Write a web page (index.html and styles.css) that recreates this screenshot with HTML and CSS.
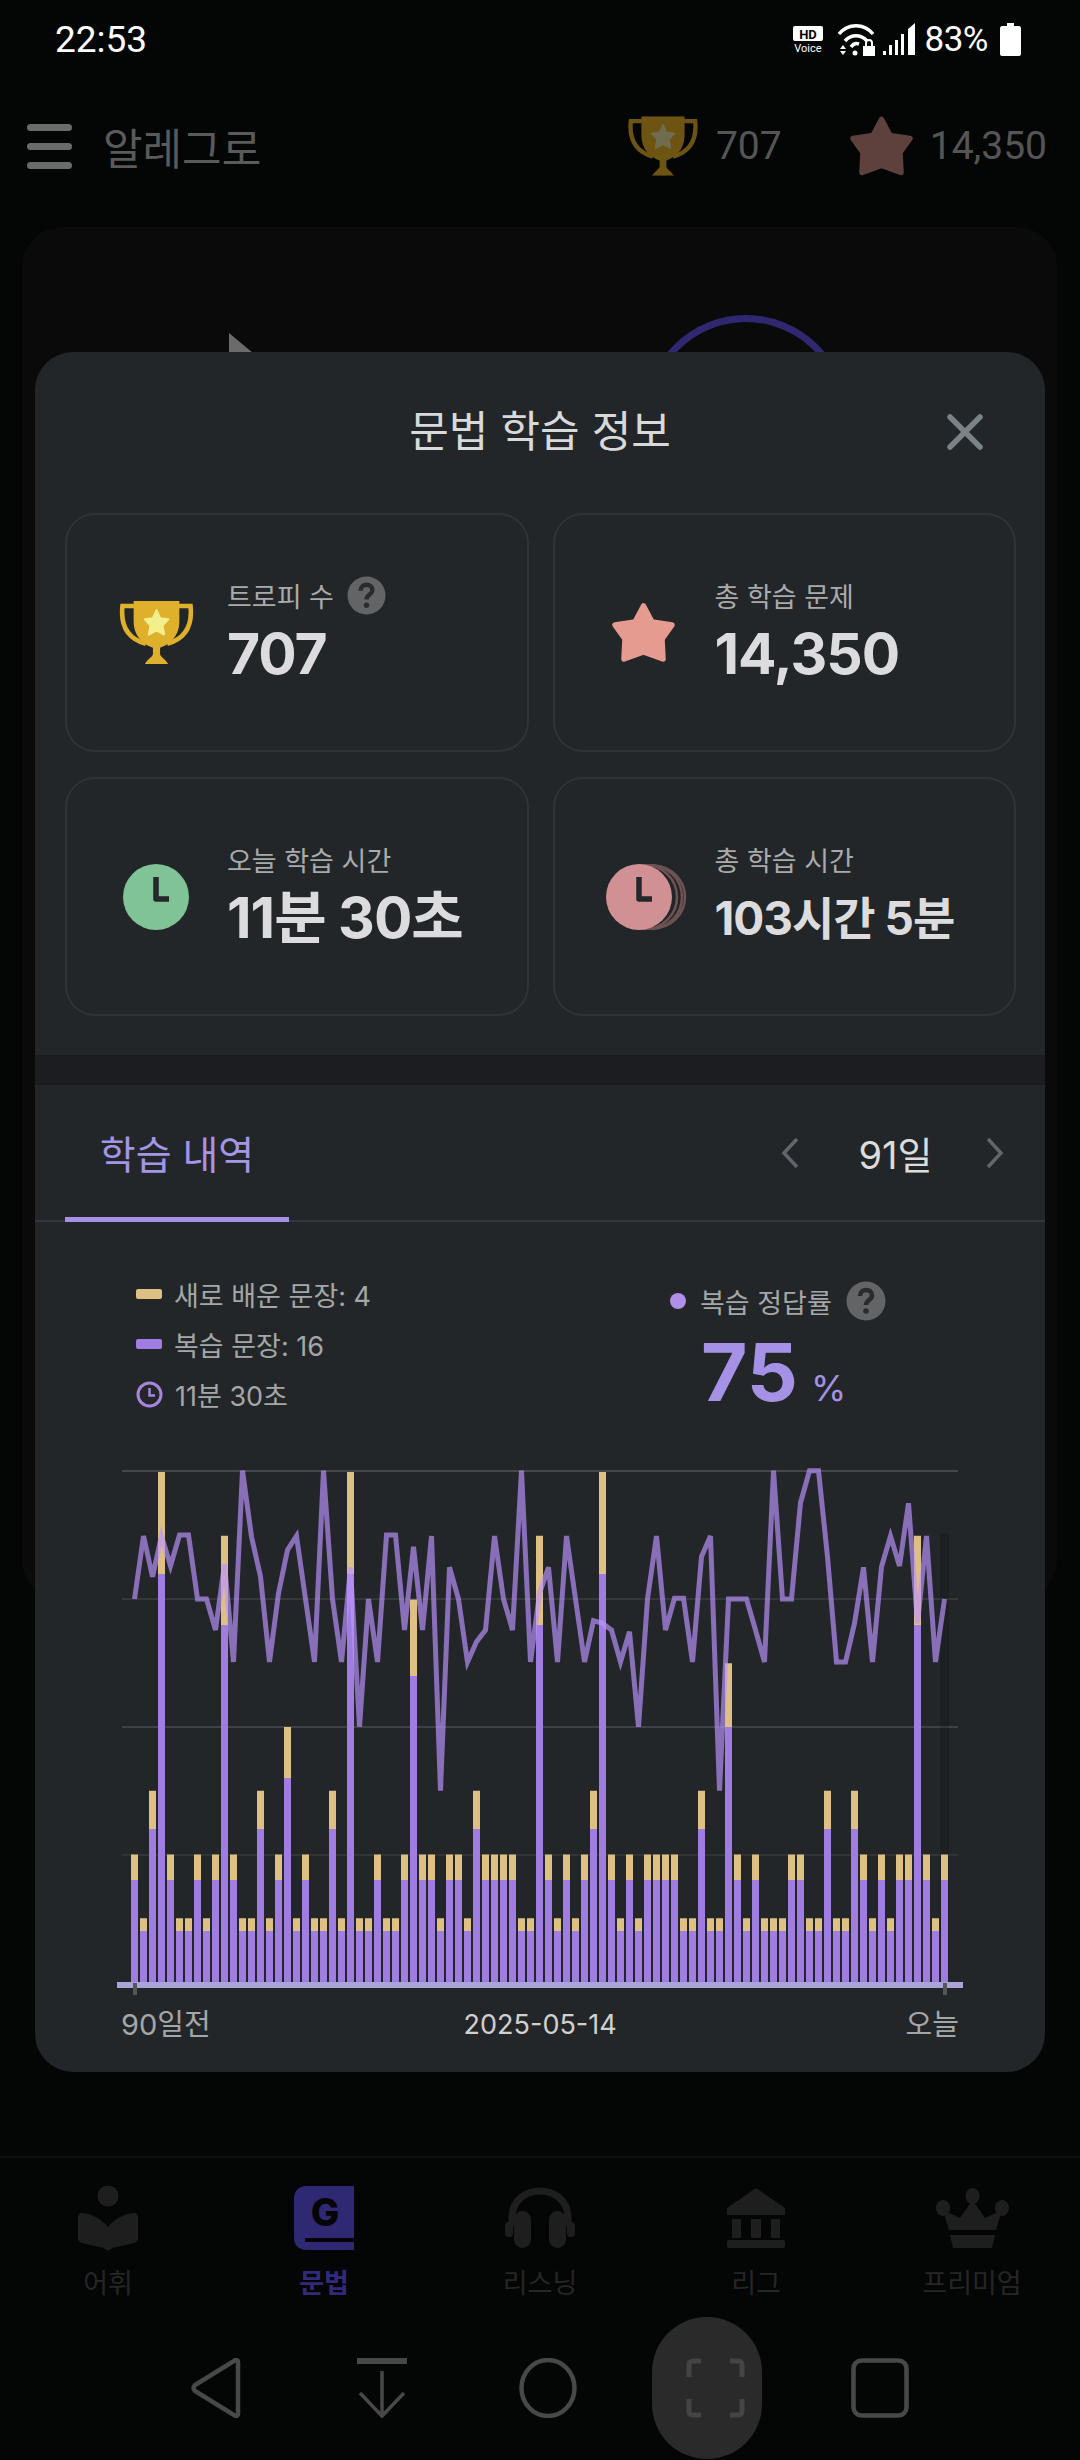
FILE: index.html
```html
<!DOCTYPE html>
<html lang="ko">
<head>
  <meta charset="utf-8">
  <title>알레그로</title>
  <link rel="stylesheet" href="styles.css">
</head>
<body>
  <svg class="defs" width="0" height="0">
    <symbol id="i-trophy" viewBox="0 0 75 62">
      <path d="M17 5H4C2 24 9 37 27 42M58 5H71C73 24 66 37 48 42" fill="none" stroke="currentColor" stroke-width="4.5"/>
      <path d="M15 0H60V20C60 35 50 43 41 46V52C41 55 46 57 49 62H26C29 57 34 55 34 52V46C25 43 15 35 15 20Z" fill="currentColor"/>
    </symbol>
    <symbol id="i-star" viewBox="0 0 63 60">
      <path d="M31.5 3 40 19 60 22 50 36 51 56 31.5 49 12 56 13 36 3 22 23 19Z" fill="currentColor" stroke="currentColor" stroke-width="5.500" stroke-linejoin="round"/>
    </symbol>
    <symbol id="i-help" viewBox="0 0 40 40">
      <circle cx="20" cy="20" r="19.5" fill="#636466"/>
      <path d="M14 15C14 7 26 7 26 14.500C26 19 20 19 20 24" fill="none" stroke="#2a2b2d" stroke-width="4.500"/>
      <circle cx="20" cy="30" r="2.800" fill="#2a2b2d"/>
    </symbol>
  </svg>

  <div class="page">
    <div class="statusbar">
      <span class="clock">22:53</span>
      <div class="status-right">
        <svg width="30" height="27" viewBox="0 0 30 27">
          <rect x="0" y="0" width="30" height="15" rx="2" fill="#fff"/>
          <text class="hd-text" x="15" y="12.500" text-anchor="middle">HD</text>
          <text class="voice-text" x="15" y="25.500" text-anchor="middle">Voice</text>
        </svg>
        <svg class="wifi" width="38" height="34" viewBox="0 0 38 34">
          <path d="M2 12C11 1 27 1 36 12M8 19C14 12 24 12 30 19M14 25C16 22 19 21 22 22" fill="none" stroke="#fff" stroke-width="3.500"/>
          <path d="M3 27 6 23 9 27ZM3 29H9L6 33Z" fill="#fff"/>
          <circle cx="18" cy="31" r="2.500" fill="#fff"/>
          <rect x="26" y="24" width="12" height="10" fill="#fff"/>
          <path d="M29 24V21C29 17 35 17 35 21V24" fill="none" stroke="#fff" stroke-width="2"/>
        </svg>
        <svg width="32" height="32" viewBox="0 0 32 32">
          <path d="M0 32V28H3V32ZM6 32V22H9V32ZM12 32V17H15V32ZM18 32V11H21V32ZM25 32V6L32 0V32Z" fill="#fff"/>
        </svg>
        <span class="battery-text">83%</span>
        <svg width="21" height="33" viewBox="0 0 21 33">
          <path d="M7 0H14V3H19C20 3 21 4 21 5V31C21 32 20 33 19 33H2C1 33 0 32 0 31V5C0 4 1 3 2 3H7Z" fill="#fff"/>
        </svg>
      </div>
    </div>

    <header class="appbar">
      <div class="burger"><i></i><i></i><i></i></div>
      <span class="app-title">알레그로</span>
      <div class="app-stats">
        <svg class="app-trophy" width="72" height="60" viewBox="0 0 75 62">
          <use href="#i-trophy" width="75" height="62"/>
          <path d="M37.500 9 41 17 49 18 43.500 24 45 33 37.500 29 30 33 31.500 24 26 18 34 17Z" fill="#6f6d50" stroke="#6f6d50" stroke-width="2" stroke-linejoin="round"/>
        </svg>
        <span class="app-num">707</span>
        <svg class="app-star" width="63" height="61"><use href="#i-star"/></svg>
        <span class="app-num">14,350</span>
      </div>
    </header>

    <main class="main-area">
      <div class="back-card">
        <span class="back-tip"></span>
        <span class="back-ring"></span>
      </div>
    </main>

    <nav class="tabbar">
      <div class="tab-item">
        <svg width="60" height="66" viewBox="0 0 60 66">
          <circle cx="30" cy="11" r="10.500" fill="currentColor"/>
          <path d="M3 28C12 28 24 34 30 42 36 34 48 28 57 28 59 28 60 30 60 32V54C60 56 58 57 56 58L34 63 30 66 26 63 4 58C2 57 0 56 0 54V32C0 30 1 28 3 28Z" fill="currentColor"/>
        </svg>
        <span>어휘</span>
      </div>
      <div class="tab-item is-active">
        <svg width="60" height="64" viewBox="0 0 60 64">
          <path d="M12 0H60V64H12C5 64 0 59 0 52V12C0 5 5 0 12 0Z" fill="currentColor"/>
          <rect x="11" y="52" width="49" height="4" fill="#050505"/>
          <text class="g-text" x="31" y="40" text-anchor="middle">G</text>
        </svg>
        <span>문법</span>
      </div>
      <div class="tab-item">
        <svg width="70" height="60" viewBox="0 0 70 60">
          <path d="M7 38V30C7 -6 63 -6 63 30V38" fill="none" stroke="currentColor" stroke-width="7"/>
          <rect x="9" y="23" width="17" height="37" rx="8.500" fill="currentColor"/>
          <rect x="44" y="23" width="17" height="37" rx="8.500" fill="currentColor"/>
          <rect x="0" y="34" width="8" height="15" rx="4" fill="currentColor"/>
          <rect x="62" y="34" width="8" height="15" rx="4" fill="currentColor"/>
        </svg>
        <span>리스닝</span>
      </div>
      <div class="tab-item">
        <svg width="58" height="60" viewBox="0 0 58 60">
          <path d="M29 0 58 20V27H0V20Z" fill="currentColor"/>
          <path d="M5 31H14V50H5ZM24 31H34V50H24ZM44 31H53V50H44Z" fill="currentColor"/>
          <rect x="0" y="52" width="58" height="8" rx="2" fill="currentColor"/>
        </svg>
        <span>리그</span>
      </div>
      <div class="tab-item">
        <svg width="73" height="60" viewBox="0 0 73 60">
          <ellipse cx="36.500" cy="8" rx="7" ry="8" fill="currentColor"/>
          <ellipse cx="7" cy="20" rx="7" ry="8" fill="currentColor"/>
          <ellipse cx="66" cy="20" rx="7" ry="8" fill="currentColor"/>
          <path d="M36.500 12 49 30 66 22 60 42H13L7 22 24 30Z" fill="currentColor"/>
          <path d="M14 47H59L56 60H17Z" fill="currentColor"/>
        </svg>
        <span>프리미엄</span>
      </div>
    </nav>

    <div class="sysnav">
      <div class="sys-btn">
        <svg width="50" height="60" viewBox="0 0 50 60"><path d="M47 4V56C47 58 45 59 43 57L4 33C2 31 2 29 4 27L43 3C45 1 47 2 47 4Z" fill="none" stroke="currentColor" stroke-width="4.500"/></svg>
      </div>
      <div class="sys-btn">
        <svg width="50" height="60" viewBox="0 0 50 60"><path d="M0 3H50" stroke="currentColor" stroke-width="6" stroke-linecap="round"/><path d="M25 13V57M3 35 25 58 47 35" fill="none" stroke="currentColor" stroke-width="3.500"/></svg>
      </div>
      <div class="sys-btn">
        <svg width="58" height="60" viewBox="0 0 58 60"><ellipse cx="29" cy="30" rx="26.500" ry="28" fill="none" stroke="currentColor" stroke-width="4.500"/></svg>
      </div>
      <div class="sys-btn sys-pill">
        <svg width="59" height="60" viewBox="0 0 59 60"><path d="M15 3H7C4 3 3 4 3 7V19M44 3H52C55 3 56 4 56 7V19M15 57H7C4 57 3 56 3 53V41M44 57H52C55 57 56 56 56 53V41" fill="none" stroke="currentColor" stroke-width="5"/></svg>
      </div>
      <div class="sys-btn">
        <svg width="58" height="60" viewBox="0 0 58 60"><rect x="2.500" y="2.500" width="53" height="55" rx="8" fill="none" stroke="currentColor" stroke-width="4.500"/></svg>
      </div>
    </div>

    <section class="sheet">
      <div class="sheet-head">
        <span></span>
        <h2 class="sheet-title">문법 학습 정보</h2>
        <svg class="sheet-close" width="36" height="36" viewBox="0 0 36 36"><path d="M3 3 33 33M33 3 3 33" stroke="#7b8288" stroke-width="5.500" stroke-linecap="round"/></svg>
      </div>

      <div class="stat-grid">
        <div class="stat-card">
          <div class="stat-icon">
            <svg class="trophy-gold" width="77" height="63" viewBox="0 0 75 62">
              <use href="#i-trophy" width="75" height="62"/>
              <path d="M37.500 9 41 17 49 18 43.500 24 45 33 37.500 29 30 33 31.500 24 26 18 34 17Z" fill="#f3ef8d" stroke="#f3ef8d" stroke-width="2" stroke-linejoin="round"/>
            </svg>
          </div>
          <div class="stat-body">
            <div class="stat-label">트로피 수 <svg class="help" width="39" height="39"><use href="#i-help"/></svg></div>
            <div class="stat-value">707</div>
          </div>
        </div>
        <div class="stat-card">
          <div class="stat-icon">
            <svg class="star-pink" width="63" height="60"><use href="#i-star"/></svg>
          </div>
          <div class="stat-body">
            <div class="stat-label">총 학습 문제</div>
            <div class="stat-value">14,350</div>
          </div>
        </div>
        <div class="stat-card">
          <div class="stat-icon">
            <svg width="66" height="66" viewBox="0 0 66 66">
              <circle cx="33" cy="33" r="33" fill="#7fc396"/>
              <path d="M33 13V35H46" fill="none" stroke="#24272b" stroke-width="5.500" stroke-linejoin="round"/>
            </svg>
          </div>
          <div class="stat-body">
            <div class="stat-label">오늘 학습 시간</div>
            <div class="stat-value">11분 30초</div>
          </div>
        </div>
        <div class="stat-card">
          <div class="stat-icon stat-icon-stack">
            <svg width="82" height="66" viewBox="0 0 82 66">
              <circle cx="48" cy="33" r="31" fill="#232629" stroke="#6e5254" stroke-width="2.500"/>
              <circle cx="44" cy="33" r="32" fill="#232629" stroke="#6e5254" stroke-width="2.500"/>
              <circle cx="39" cy="33" r="32" fill="#232629" stroke="#6e5254" stroke-width="2.500"/>
              <circle cx="33" cy="33" r="33" fill="#d19093"/>
              <path d="M33 13V35H46" fill="none" stroke="#24272b" stroke-width="5.500" stroke-linejoin="round"/>
            </svg>
          </div>
          <div class="stat-body">
            <div class="stat-label">총 학습 시간</div>
            <div class="stat-value stat-value-sm">103시간 5분</div>
          </div>
        </div>
      </div>

      <div class="band"></div>

      <div class="tabs">
        <div class="tab-on">학습 내역</div>
        <div class="range">
          <svg width="18" height="32" viewBox="0 0 18 32"><path d="M16 2 3 16 16 30" fill="none" stroke="#5f666c" stroke-width="3.500"/></svg>
          <span class="range-text">91일</span>
          <svg width="18" height="32" viewBox="0 0 18 32"><path d="M2 2 15 16 2 30" fill="none" stroke="#5f666c" stroke-width="3.500"/></svg>
        </div>
      </div>

      <div class="summary">
        <ul class="legend">
          <li><i class="swatch swatch-new"></i>새로 배운 문장: 4</li>
          <li><i class="swatch swatch-review"></i>복습 문장: 16</li>
          <li>
            <svg class="legend-clock" width="27" height="27" viewBox="0 0 27 27"><circle cx="13.500" cy="13.500" r="11.500" fill="none" stroke="#a884dd" stroke-width="3"/><path d="M13.500 7V14.500H19" fill="none" stroke="#a884dd" stroke-width="2.500"/></svg>
            11분 30초
          </li>
        </ul>
        <div class="rate">
          <div class="rate-label"><i class="rate-dot"></i>복습 정답률<svg class="help" width="40" height="40"><use href="#i-help"/></svg></div>
          <div class="rate-value">75<small>%</small></div>
        </div>
      </div>

      <svg id="chart" class="chart" width="1010" height="540" viewBox="35 1460 1010 540"></svg>

      <div class="axis-labels">
        <span>90일전</span>
        <span class="axis-date">2025-05-14</span>
        <span>오늘</span>
      </div>
    </section>
  </div>

  <script src="chart.js"></script>
</body>
</html>
```

FILE: styles.css
```css
* {
  box-sizing: border-box;
}

body {
  margin: 0;
  background-color: #040505;
  font-family: Inter, "Noto Sans CJK KR", sans-serif;
}

.defs {
  position: absolute;
}

.page {
  position: relative;
  width: 1080px;
  height: 2460px;
  overflow: hidden;
  display: flex;
  flex-direction: column;
  background-color: #040505;
}

/* status bar */
.statusbar {
  height: 78px;
  padding: 0 59px 0 55px;
  display: flex;
  align-items: center;
  justify-content: space-between;
  font-family: Roboto, sans-serif;
  color: #fff;
}

.clock {
  font-size: 37px;
}

.status-right {
  display: flex;
  align-items: center;
  gap: 8px;
}

.wifi {
  margin-left: 6px;
}

.battery-text {
  font-size: 35px;
  margin: 0 4px 0 2px;
  letter-spacing: -0.5px;
}

.hd-text {
  font: 700 13px Roboto, sans-serif;
  fill: #050505;
}

.voice-text {
  font: 400 11px Roboto, sans-serif;
  fill: #fff;
}

/* app bar behind the sheet */
.appbar {
  height: 136px;
  margin-bottom: 13px;
  padding: 0 33px 0 27px;
  display: flex;
  align-items: center;
}

.burger {
  width: 45px;
  display: flex;
  flex-direction: column;
  gap: 12px;
}

.burger i {
  height: 7px;
  border-radius: 4px;
  background-color: #6b6b6b;
}

.app-title {
  margin-left: 31px;
  font-family: "Noto Sans CJK KR", sans-serif;
  font-size: 43px;
  color: #5a5a5a;
}

.app-stats {
  margin-left: auto;
  display: flex;
  align-items: center;
}

.app-trophy {
  color: #6d5413;
}

.app-num {
  margin-left: 17px;
  font-family: Roboto, sans-serif;
  font-size: 39px;
  color: #555;
}

.app-star {
  margin-left: 68px;
  color: #5e413c;
}

.main-area {
  flex: 1;
  padding: 0 23px 0 22px;
}

.back-card {
  position: relative;
  height: 1373px;
  border-radius: 40px;
  background-color: #0a0a0b;
}

.back-tip {
  position: absolute;
  left: 207px;
  top: 106px;
  width: 24px;
  height: 20px;
  background-color: #6b6b6b;
  clip-path: polygon(0 0, 100% 100%, 0 100%);
}

.back-ring {
  position: absolute;
  left: 622px;
  top: 88px;
  width: 204px;
  height: 204px;
  border: 7px solid #2f2870;
  border-radius: 50%;
}

/* bottom tabs */
.tabbar {
  height: 160px;
  border-top: 2px solid #0e1011;
  display: grid;
  grid-template-columns: repeat(5, 216px);
}

.tab-item {
  padding-top: 27px;
  display: flex;
  flex-direction: column;
  align-items: center;
  color: #1e1e1e;
}

.tab-item svg {
  height: 66px;
}

.tab-item span {
  margin-top: 14px;
  font-family: "Noto Sans CJK KR", sans-serif;
  font-size: 27px;
  line-height: 34px;
  color: #262626;
}

.tab-item.is-active {
  color: #2f2872;
}

.tab-item.is-active span {
  font-weight: 700;
  color: #322a78;
}

.g-text {
  font: 800 38px Inter, sans-serif;
  fill: #050505;
}

/* system navigation */
.sysnav {
  height: 144px;
  padding-left: 133px;
  display: grid;
  grid-template-columns: repeat(5, 166px);
  align-items: center;
}

.sys-btn {
  display: flex;
  align-items: center;
  justify-content: center;
  color: #484848;
}

.sys-pill {
  width: 110px;
  height: 142px;
  justify-self: center;
  margin-left: -14px;
  padding-left: 16px;
  border-radius: 55px;
  background-color: #2a2a2a;
  color: #444;
}

/* info sheet */
.sheet {
  position: absolute;
  left: 35px;
  top: 352px;
  width: 1010px;
  height: 1720px;
  border-radius: 38px;
  background-color: #232629;
}

.sheet-head {
  height: 161px;
  padding-bottom: 54px;
  display: grid;
  grid-template-columns: 1fr auto 1fr;
  align-items: end;
}

.sheet-title {
  margin: 0;
  font-size: 43px;
  font-weight: 400;
  line-height: 56px;
  color: #d8d9da;
}

.sheet-close {
  justify-self: end;
  margin: 0 62px 9px 0;
}

.stat-grid {
  margin: 0 29px 0 30px;
  display: grid;
  grid-template-columns: 1fr 1fr;
  gap: 25px 24px;
}

.stat-card {
  height: 239px;
  padding-left: 51px;
  display: flex;
  align-items: center;
  border: 2px solid #2f3237;
  border-radius: 30px;
}

.stat-icon {
  width: 76px;
  margin-right: 33px;
  display: flex;
  align-items: center;
  justify-content: center;
}

.stat-icon svg {
  flex-shrink: 0;
}

.stat-icon-stack {
  position: relative;
  left: 3px;
}

.stat-body {
  display: flex;
  flex-direction: column;
  padding: 1px 0 3px;
}

.stat-label {
  height: 38px;
  display: flex;
  align-items: center;
  gap: 13px;
  font-size: 27px;
  color: #a9aaac;
}

.stat-value {
  margin-top: 7px;
  font-size: 57px;
  font-weight: 700;
  line-height: 66px;
  letter-spacing: -1px;
  color: #dcdcde;
}

.stat-value-sm {
  font-size: 46px;
}

.trophy-gold {
  color: #dfb02c;
}

.star-pink {
  color: #e69b91;
}

.band {
  height: 30px;
  margin-top: 39px;
  background-color: #1b1d20;
}

.tabs {
  height: 137px;
  border-bottom: 2px solid #33363a;
  display: flex;
  align-items: stretch;
  justify-content: space-between;
}

.tab-on {
  width: 224px;
  margin: 0 0 -2px 30px;
  padding-top: 2px;
  display: flex;
  align-items: center;
  justify-content: center;
  border-bottom: 5px solid #a592e6;
  font-size: 39px;
  color: #a495e5;
}

.range {
  width: 223px;
  margin-right: 41px;
  display: flex;
  align-items: center;
  justify-content: space-between;
}

.range-text {
  margin-left: 6px;
  font-size: 38px;
  color: #dcdcdc;
}

.summary {
  height: 238px;
  padding: 47px 0 0 101px;
  display: grid;
  grid-template-columns: 534px 1fr;
}

.legend {
  margin: 0;
  padding: 0;
  list-style: none;
  font-size: 27px;
  color: #a5a6a7;
}

.legend li {
  height: 50px;
  display: flex;
  align-items: center;
  gap: 12px;
}

.swatch {
  width: 26px;
  height: 10px;
  border-radius: 2px;
}

.swatch-new {
  background-color: #dfc084;
}

.swatch-review {
  background-color: #a07de0;
}

.rate-label {
  height: 40px;
  margin-top: 12px;
  display: flex;
  align-items: center;
  font-size: 27px;
  color: #a5a6a7;
}

.rate-dot {
  width: 16px;
  height: 16px;
  margin-right: 14px;
  border-radius: 50%;
  background-color: #b08fe8;
}

.rate-label .help {
  margin-left: 14px;
}

.rate-value {
  margin: 8px 0 0 31px;
  font-size: 80px;
  font-weight: 700;
  line-height: 86px;
  color: #a592e6;
}

.rate-value small {
  margin-left: 13px;
  font-size: 36px;
  font-weight: 400;
}

.chart {
  display: block;
}

.axis-labels {
  margin: 2px 0 0 86px;
  width: 838px;
  height: 40px;
  display: flex;
  align-items: center;
  justify-content: space-between;
  font-size: 29px;
  color: #a5a6a7;
}

.axis-date {
  margin: 4px 36px 0 0;
  font-size: 27px;
  color: #d0d0d0;
}
```

FILE: chart.js
```js
// totals per day, 20% of each bar is "new", the rest is "review"
const totals = [
  20, 10, 30, 80, 20, 10, 10, 20, 10, 20, 70, 20, 10, 10, 30, 10, 20, 40, 10, 20, 10, 10, 30,
  10, 80, 10, 10, 20, 10, 10, 20, 60, 20, 20, 10, 20, 20, 10, 30, 20, 20, 20, 20, 10, 10, 70,
  20, 10, 20, 10, 20, 30, 80, 20, 10, 20, 10, 20, 20, 20, 20, 10, 10, 30, 10, 10, 50, 20, 10,
  20, 10, 10, 10, 20, 20, 10, 10, 30, 10, 10, 30, 20, 10, 20, 10, 20, 20, 70, 20, 10, 20
];

// y of the accuracy line, measured in thirds of a pixel below y=1450
const line = [
  447, 258, 380, 258, 348, 255, 255, 447, 447, 540, 342, 636, 62, 260, 380, 636, 430, 300, 258,
  447, 636, 62, 447, 636, 352, 830, 447, 636, 255, 255, 540, 290, 540, 258, 1022, 352, 447, 636,
  575, 540, 258, 447, 540, 62, 636, 430, 352, 636, 258, 447, 636, 512, 520, 540, 636, 545, 830,
  447, 258, 540, 445, 445, 636, 320, 258, 1022, 447, 447, 447, 540, 636, 62, 447, 447, 158, 62,
  62, 320, 636, 636, 520, 352, 636, 350, 258, 348, 160, 520, 258, 636, 447
];

const BASE = 1982;
const UNIT = 6.375;
const svg = document.getElementById('chart');

function add(tag, attrs) {
  const el = document.createElementNS('http://www.w3.org/2000/svg', tag);
  for (const key in attrs) {
    el.setAttribute(key, attrs[key]);
  }
  svg.appendChild(el);
}

[
  [1471, '#44474b'],
  [1599, '#35383b'],
  [1727, '#3e4145'],
  [1855, '#303436']
].forEach(([y, color]) => {
  add('rect', { x: 122, y: y - 1, width: 836, height: 2, fill: color });
});

add('rect', { x: 940, y: 1533, width: 9, height: 449, fill: '#000', opacity: 0.15 });

totals.forEach((total, i) => {
  const x = 131 + 9 * i;
  const h = total * UNIT;
  const review = h * 0.8;
  add('rect', { x, y: BASE - h, width: 7, height: h - review, fill: '#dfc084' });
  add('rect', { x, y: BASE - review, width: 7, height: review, fill: '#a07de0' });
});

add('rect', { x: 117, y: 1982, width: 846, height: 6, fill: '#a8a4d6' });
add('rect', { x: 133, y: 1983, width: 4, height: 12, fill: '#555' });
add('rect', { x: 943, y: 1983, width: 4, height: 12, fill: '#555' });

add('polyline', {
  points: line.map((v, i) => `${134.5 + 9 * i},${(1450 + v / 3).toFixed(1)}`).join(' '),
  fill: 'none',
  stroke: 'rgb(188,148,255)',
  'stroke-opacity': 0.67,
  'stroke-width': 5
});
```
